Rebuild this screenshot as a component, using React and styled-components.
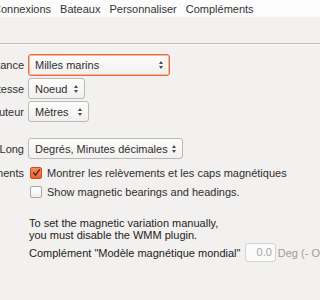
import styled, { createGlobalStyle } from "styled-components"

const GlobalStyle = createGlobalStyle`
  html, body {
    margin: 0;
    padding: 0;
    background: #f2f1f0;
    overflow: hidden;
  }
  body {
    font-family: "Liberation Sans", Arial, sans-serif;
    font-size: 11px;
    color: #3c3c3c;
  }
`

const Window = styled.div`
  width: 320px;
  height: 300px;
  overflow: hidden;
  display: flex;
  flex-direction: column;
`

const MenuBar = styled.div`
  height: 17px;
  background: #fcfcfc;
  display: flex;
  align-items: center;
  gap: 9px;
  margin-left: -7px;
  white-space: nowrap;
`

const MenuItem = styled.span`
  color: #333;
`

const Toolbar = styled.div`
  height: 26px;
  background: #f2f1f0;
  border-bottom: 1px solid #c4c1bd;
  box-shadow: 0 1px 0 #fbfbfb;
`

const Panel = styled.div`
  padding-top: 10px;
  display: flex;
  flex-direction: column;
`

const Form = styled.div`
  display: grid;
  grid-template-columns: 90px auto;
  column-gap: 4px;
  row-gap: 2px;
  margin-left: -66px;
  align-items: center;
  justify-items: start;
`

const Label = styled.div`
  justify-self: end;
  white-space: nowrap;
  color: #2e2e2e;
  margin-top: ${p => p.$top || 0}px;
`

const Spacer = styled.div`
  grid-column: 1 / span 2;
  height: ${p => p.$h}px;
`

const Select = styled.div`
  box-sizing: border-box;
  width: ${p => p.$w}px;
  height: ${p => p.$h || 21}px;
  padding: 0 4px 0 6px;
  display: flex;
  align-items: center;
  justify-content: space-between;
  border: 1px solid ${p => (p.$focus ? "#ec6a3a" : "#bcb8b3")};
  box-shadow: ${p => (p.$focus ? "inset 0 0 0 1px #f6b89e" : "none")};
  border-radius: 3px;
  background: linear-gradient(#fdfdfd, #f1f0ef);
  white-space: nowrap;
  color: #2e2e2e;
`

const Arrows = styled.span`
  display: flex;
  flex-direction: column;
  align-items: center;
  gap: 2px;
  margin-right: 2px;
`

const Tri = styled.span`
  width: 0;
  height: 0;
  border-left: 2.5px solid transparent;
  border-right: 2.5px solid transparent;
  ${p =>
    p.$down
      ? "border-top: 3px solid #4a4a4a;"
      : "border-bottom: 3px solid #4a4a4a;"}
`

const Spin = () => (
  <Arrows>
    <Tri />
    <Tri $down />
  </Arrows>
)

const CheckRow = styled.label`
  display: flex;
  align-items: center;
  gap: 5px;
  height: 17px;
  padding-left: 2px;
  white-space: nowrap;
  color: #2e2e2e;
`

const Box = styled.span`
  box-sizing: border-box;
  width: 12px;
  height: 12px;
  border-radius: 2px;
  border: 1px solid ${p => (p.$on ? "#c9501f" : "#a9a5a0")};
  background: ${p => (p.$on ? "linear-gradient(#f48a5c, #ea6331)" : "linear-gradient(#ffffff, #f0efee)")};
  display: flex;
  align-items: center;
  justify-content: center;
`

const Note = styled.div`
  margin: 17px 0 0 29px;
  line-height: 12px;
  white-space: nowrap;
  color: #222;
`

const WmmRow = styled.div`
  display: flex;
  align-items: center;
  gap: 2px;
  margin: 2px 0 0 29px;
  white-space: nowrap;
  color: #222;
`

const NumInput = styled.div`
  box-sizing: border-box;
  width: 35px;
  height: 19px;
  margin-left: 3px;
  border: 1px solid #d6d3cf;
  border-radius: 3px;
  background: #fbfbfb;
  color: #a6a39f;
  text-align: right;
  padding-right: 3px;
  line-height: 17px;
`

const Muted = styled.span`
  color: #9f9c98;
`

const Check = () => (
  <svg width="9" height="9" viewBox="0 0 9 9">
    <path d="M1.2 4.6 L3.5 7 L7.8 1.4" fill="none" stroke="#5b2a12" strokeWidth="1.5" />
  </svg>
)

export default function App() {
  const menus = ["Connexions", "Bateaux", "Personnaliser", "Compléments"]
  return (
    <>
      <GlobalStyle />
      <Window>
        <MenuBar>
          {menus.map(m => (
            <MenuItem key={m}>{m}</MenuItem>
          ))}
        </MenuBar>
        <Toolbar />
        <Panel>
          <Form>
            <Label>Distance</Label>
            <Select $w={142} $h={22} $focus>
              Milles marins <Spin />
            </Select>
            <Label>Vitesse</Label>
            <Select $w={57}>
              Noeud <Spin />
            </Select>
            <Label>Hauteur</Label>
            <Select $w={61}>
              Mètres <Spin />
            </Select>
            <Spacer $h={12} />
            <Label>Lat/Long</Label>
            <Select $w={155}>
              Degrés, Minutes décimales <Spin />
            </Select>
            <Label $top={3}>Relèvements</Label>
            <CheckRow style={{ marginTop: 3 }}>
              <Box $on>
                <Check />
              </Box>
              Montrer les relèvements et les caps magnétiques
            </CheckRow>
            <div />
            <CheckRow>
              <Box />
              Show magnetic bearings and headings.
            </CheckRow>
          </Form>
          <Note>
            To set the magnetic variation manually,
            <br />
            you must disable the WMM plugin.
          </Note>
          <WmmRow>
            Complément "Modèle magnétique mondial"
            <NumInput>0.0</NumInput>
            <Muted>Deg (- O</Muted>
          </WmmRow>
        </Panel>
      </Window>
    </>
  )
}
